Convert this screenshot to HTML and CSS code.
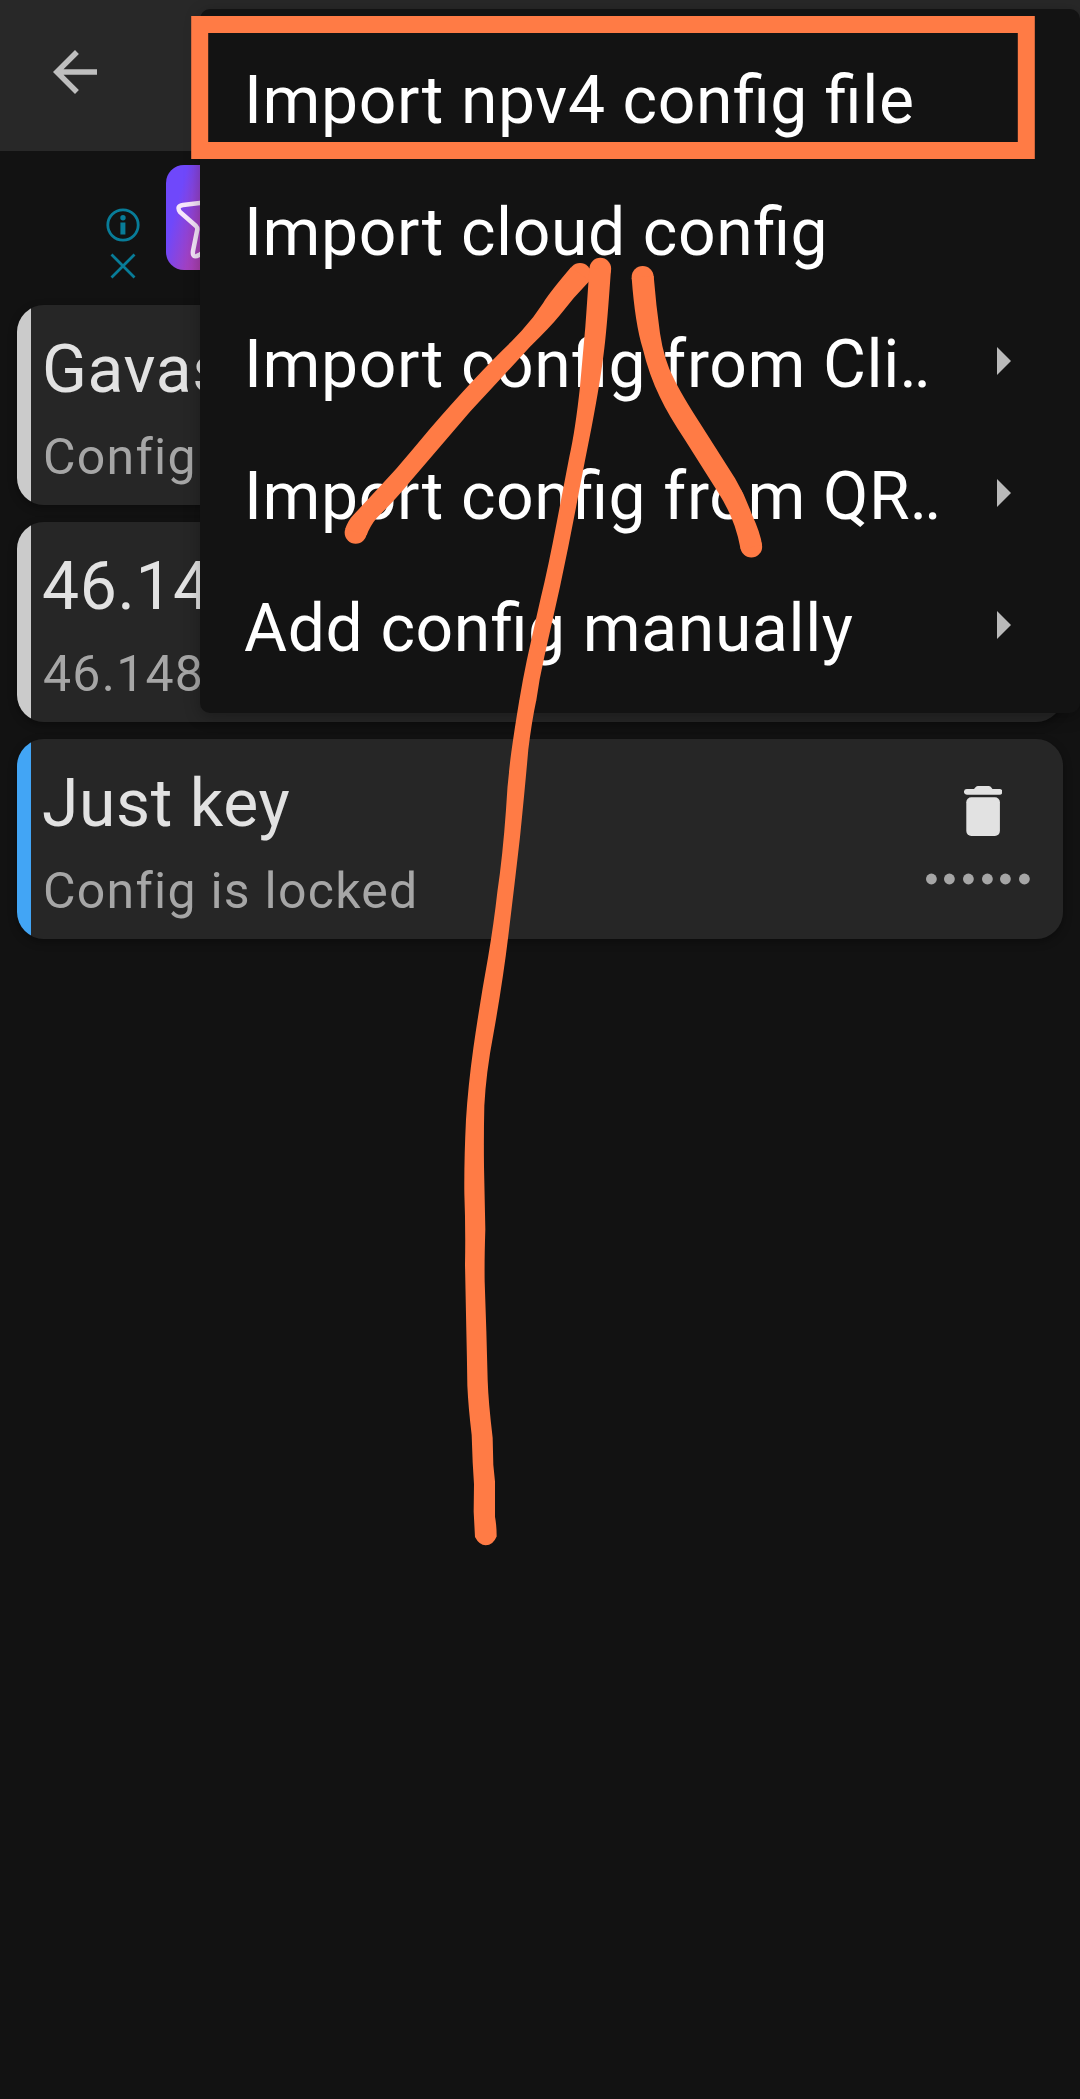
FILE: index.html
```html
<!DOCTYPE html>
<html lang="en">
<head>
<meta charset="utf-8">
<title>Configs</title>
<link rel="stylesheet" href="styles.css">
</head>
<body>
<div class="screen">
  <header class="appbar">
    <svg class="back" viewBox="0 0 24 24"><path d="M20 11H7.83l5.59-5.59L12 4l-8 8 8 8 1.41-1.41L7.83 13H20v-2z"/></svg>
  </header>
  <section class="ad">
    <div class="ad-controls">
      <svg class="ad-info" viewBox="0 0 34 34"><circle cx="17" cy="17" r="15.2"/><circle class="solid" cx="17" cy="9.7" r="2.7"/><path class="solid" d="M14.4 14.5h5v12h-5z"/></svg>
      <svg class="ad-close" viewBox="0 0 26 26"><path d="M1.5 1.5l23 23M24.500 1.500l-23 23"/></svg>
    </div>
    <div class="ad-logo">
      <svg viewBox="0 0 105 105"><path d="M52 8L64 35L90 40Q96 41 91 46L73 63L78 88Q78 94 72 91L52 77L33 90Q26 94 27 86L31 66Q32 63 30 61L14 47Q10 41 17 40L42 37Z"/></svg>
    </div>
  </section>
  <main class="list">
    <article class="card">
      <div class="card-text"><h2>Gavas</h2><p>Config</p></div>
    </article>
    <article class="card">
      <div class="card-text"><h2>46.14</h2><p>46.148</p></div>
    </article>
    <article class="card selected">
      <div class="card-text"><h2>Just key</h2><p>Config is locked</p></div>
      <div class="card-side">
        <svg class="trash" viewBox="0 0 38 50"><path d="M2.800 3H10L12 .8Q12.700 0 14 0H24.500Q26 0 26.700 .8L28.500 3H35.500A2.800 2.800 0 0 1 35.500 8.700H2.800A2.800 2.800 0 0 1 2.800 3z"/><rect x="2.300" y="11.200" width="33.600" height="38.800" rx="5"/></svg>
        <svg class="dots" viewBox="0 0 104 12"><circle cx="5.400" cy="6" r="5.400"/><circle cx="23.400" cy="6" r="5.400"/><circle cx="42.400" cy="6" r="5.400"/><circle cx="61.400" cy="6" r="5.400"/><circle cx="79.400" cy="6" r="5.400"/><circle cx="98.400" cy="6" r="5.400"/></svg>
      </div>
    </article>
  </main>

  <nav class="menu">
    <div class="item"><span>Import npv4 config file</span></div>
    <div class="item"><span>Import cloud config</span></div>
    <div class="item"><span>Import config from Cli<b class="more">..</b></span><i class="caret"></i></div>
    <div class="item"><span>Import config from QR<b class="more">..</b></span><i class="caret"></i></div>
    <div class="item"><span>Add config manually</span><i class="caret"></i></div>
  </nav>

  <svg class="ink" viewBox="0 0 1080 2099">
    <rect x="199.700" y="24.500" width="826.600" height="126" fill="none" stroke="#ff7b45" stroke-width="17"/>
    <g transform="translate(330 240) scale(.33333)">
      <circle cx="750" cy="102" r="33"/><circle cx="77" cy="878" r="33"/>
      <path d="M723 82Q660 156 640 188Q612 232 575 272L545 304Q440 404 300 566Q250 626 200 685Q150 740 70 825Q55 840 46 866L110 886Q120 858 140 834Q200 775 240 725Q330 620 420 515Q500 430 600 320Q660 262 690 225Q730 172 779 122z"/>
      <circle cx="811" cy="86" r="32.500"/>
      <path d="M778 85Q772 180 766 260L750 440Q736 570 718 650L680 848Q655 980 632 1075Q606 1190 590 1263Q578 1320 568 1381H619Q628 1315 643 1250L690 1040Q720 900 745 765Q765 660 785 560Q812 420 823 325Q832 250 843 88z"/>
      <circle cx="938" cy="111" r="33"/><circle cx="1264" cy="920" r="32.500"/>
      <path d="M905 113Q915 250 938 325Q957 405 990 472Q1015 525 1065 600L1165 758Q1195 805 1214 858Q1225 890 1232 928L1296 915Q1292 880 1265 822Q1245 765 1215 715L1110 550Q1055 465 1031 415Q1002 360 990 280Q978 195 971 108z"/>
    </g>
    <path transform="translate(420 700) scale(.33333 .54845)" d="M298 0Q283 55 274 95Q262 150 258 200Q248 285 232 350Q222 405 204 470Q180 550 160 635Q144 705 138 765Q132 840 133 900Q137 960 135 1030L139 1150Q141 1200 142 1250Q145 1290 155 1340L158 1390L162 1430L161 1480L165 1526Q178 1541 197 1541Q219 1541 230 1525Q230 1505 225 1489L225 1425L220 1395L218 1345Q205 1280 203 1240L199 1150L194 1060Q193 1020 196 965L192 850Q191 790 193 740Q198 680 220 610Q248 515 265 430Q285 330 300 250Q315 160 325 90Q335 40 349 0z"/>
  </svg>
</div>
</body>
</html>
```
FILE: styles.css
```css
* { box-sizing: border-box; }

body {
  margin: 0;
  background: #121212;
  font-family: Roboto, "Noto Sans", sans-serif;
}

.screen {
  position: relative;
  height: 2099px;
  overflow: hidden;
}

.appbar {
  height: 151px;
  padding: 39px 42px;
  background: #282828;
}

.back {
  display: block;
  width: 66px;
  height: 66px;
  fill: #bebebe;
}

.ad {
  display: flex;
  height: 148px;
  padding: 14px 0 0 106.4px;
  gap: 25.6px;
}

.ad-controls {
  display: flex;
  flex-direction: column;
  align-items: center;
  gap: 11px;
  width: 34px;
  padding-top: 42.5px;
}

.ad-controls svg {
  fill: none;
  stroke: #087c98;
  stroke-width: 2.8;
}

.ad-controls .solid {
  fill: #087c98;
  stroke: none;
}

.ad-info { width: 34px; height: 34px; }
.ad-close { width: 26px; height: 26px; }

.ad-logo {
  width: 105px;
  height: 105px;
  border-radius: 18px;
  background: linear-gradient(105deg, #6f48fb 16%, #a241c2 36%, #c43c80 70%);
}

.ad-logo path {
  fill: none;
  stroke: #f6e6fb;
  stroke-width: 4.5;
  stroke-linejoin: round;
}

.list {
  display: flex;
  flex-direction: column;
  gap: 17px;
  padding: 6px 17px;
}

.card {
  display: flex;
  justify-content: space-between;
  height: 200px;
  overflow: hidden;
  border-radius: 27px;
  background: linear-gradient(90deg, #cbcbcb 14px, #262626 14px);
  box-shadow: 0 3px 8px rgba(0, 0, 0, 0.35);
}

.card.selected {
  background: linear-gradient(90deg, #42a5f5 14px, #262626 14px);
}

.card-text {
  padding: 26px 0 0 25px;
  white-space: nowrap;
}

.card h2 {
  margin: 0;
  font-size: 66px;
  font-weight: 400;
  line-height: 78px;
  letter-spacing: 0.6px;
  color: #e2e2e2;
}

.card p {
  margin: 18px 0 0 1px;
  font-size: 50px;
  line-height: 60px;
  letter-spacing: 1.25px;
  color: #a6a6a6;
}

.card-side {
  display: flex;
  flex-direction: column;
  align-items: flex-end;
  gap: 37px;
  width: 104px;
  margin-right: 33px;
  padding-top: 47px;
}

.trash { width: 38px; height: 50px; margin-right: 28px; fill: #e2e2e2; }
.dots { width: 104px; height: 12px; fill: #a6a6a6; }

.menu {
  position: absolute;
  top: 9px;
  left: 200px;
  width: 880px;
  height: 704px;
  padding: 22px 69px 22px 44px;
  border-radius: 10px;
  background: #131313;
  box-shadow: 0 4px 16px rgba(0, 0, 0, 0.28);
}

.item {
  display: flex;
  align-items: center;
  justify-content: space-between;
  height: 132px;
  padding-top: 7px;
  font-size: 66px;
  line-height: 78px;
  letter-spacing: 0.63px;
  font-feature-settings: "liga" 1;
  color: #fff;
  white-space: nowrap;
}

.more {
  margin-left: -0.5px;
  font-weight: 400;
  letter-spacing: -3px;
}

.caret {
  margin-top: -7px;
  border: solid transparent;
  border-width: 14px 0 14px 14px;
  border-left-color: #bababa;
}

.ink {
  position: absolute;
  inset: 0;
  width: 1080px;
  height: 2099px;
  fill: #ff7b45;
}
```
